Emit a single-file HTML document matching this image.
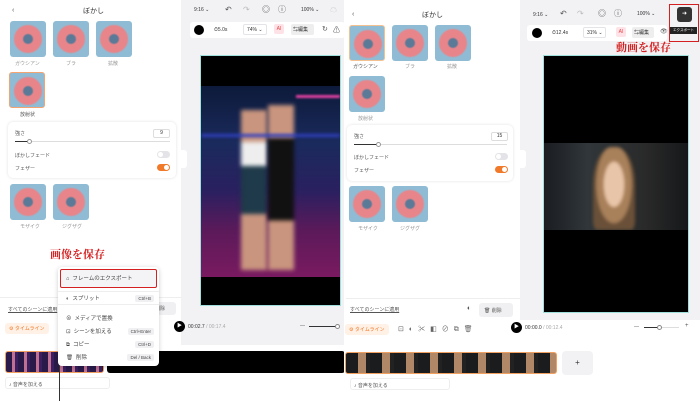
<!DOCTYPE html><html><head><meta charset="utf-8"><style>
*{margin:0;padding:0;box-sizing:border-box}
body{width:700px;height:401px;overflow:hidden;background:#fff;font-family:"Liberation Sans","Noto Sans CJK JP",sans-serif;color:#333;position:relative}
.a{position:absolute}
.t{font-size:5px;color:#555;white-space:nowrap}
.th{position:absolute;width:36px;height:36px;border-radius:3px;background:#8fbcd4;overflow:hidden}
.th::after{content:"";position:absolute;left:4px;top:4px;width:28px;height:28px;border-radius:50%;border:9px solid #e8858a;background:#5a7a98;box-sizing:border-box;filter:blur(.6px)}
.card{position:absolute;background:#fff;border-radius:5px;box-shadow:0 0 3px rgba(0,0,0,.12)}
.tg{position:absolute;width:13px;height:7px;border-radius:4px;background:#e4e4e8}
.tg::after{content:"";position:absolute;left:1px;top:1px;width:5px;height:5px;border-radius:50%;background:#fff}
.tg.on{background:#f07a2a}.tg.on::after{left:7px}
.gray{background:#f2f2f5}
.red{color:#d42020;font-weight:bold;font-family:"Noto Serif CJK SC",serif}
.chip{position:absolute;background:#fff1e6;color:#f07a2a;font-size:5px;border-radius:3px;padding:2px 4px}
.mi{position:absolute;left:8px;font-size:5.5px;color:#444}
.kb{position:absolute;right:5px;font-size:4.5px;background:#f0f0f2;padding:1px 3px;border-radius:2px;color:#444}
</style></head><body>
<!-- LEFT -->
<div class="a gray" style="left:181px;top:0;width:164px;height:345px"></div>
<div class="a t" style="left:12px;top:7px;font-size:7px">‹</div>
<div class="a t" style="left:83px;top:6px;font-size:7px;color:#333">ぼかし</div>
<div class="th" style="left:10px;top:21px"></div><div class="th" style="left:53px;top:21px"></div><div class="th" style="left:96px;top:21px"></div>
<div class="a t" style="left:15px;top:60px;color:#999">ガウシアン</div><div class="a t" style="left:66px;top:60px;color:#999">ブラ</div><div class="a t" style="left:108px;top:60px;color:#999">拡散</div>
<div class="th" style="left:9px;top:72px;border:1.5px solid #f3a470"></div>
<div class="a t" style="left:20px;top:111px">放射状</div>
<div class="card" style="left:8px;top:122px;width:168px;height:56px"></div>
<div class="a t" style="left:15px;top:130px">強さ</div>
<div class="a" style="left:153px;top:129px;width:17px;height:9px;border:1px solid #ddd;border-radius:2px;font-size:5px;text-align:center;line-height:7px">9</div>
<div class="a" style="left:15px;top:141px;width:155px;height:1px;background:#ddd"></div>
<div class="a" style="left:15px;top:141px;width:14px;height:1px;background:#333"></div>
<div class="a" style="left:27px;top:139px;width:5px;height:5px;border-radius:50%;border:1px solid #999;background:#fff"></div>
<div class="a t" style="left:15px;top:152px">ぼかしフェード</div><div class="tg" style="left:157px;top:151px"></div>
<div class="a t" style="left:15px;top:165px">フェザー</div><div class="tg on" style="left:157px;top:164px"></div>
<div class="th" style="left:10px;top:184px"></div><div class="th" style="left:53px;top:184px"></div>
<div class="a t" style="left:20px;top:223px;color:#999">モザイク</div><div class="a t" style="left:62px;top:223px;color:#999">ジグザグ</div>
<div class="a" style="left:181px;top:150px;width:6px;height:18px;background:#fff;border-radius:0 3px 3px 0"></div>
<div class="a t" style="left:194px;top:7px;color:#333">9:16 ⌄</div>
<div class="a t" style="left:225px;top:5px;font-size:8px">↶</div><div class="a t" style="left:243px;top:5px;font-size:8px;color:#bbb">↷</div>
<div class="a t" style="left:262px;top:4px;font-size:8px">◎</div><div class="a t" style="left:278px;top:4px;font-size:8px">ⓘ</div>
<div class="a t" style="left:301px;top:7px;color:#333">100% ⌄</div><div class="a t" style="left:330px;top:5px;font-size:7px;color:#bbb">☁</div>
<div class="a" style="left:190px;top:22px;width:155px;height:16px;background:#fff;border-radius:3px"></div>
<div class="a" style="left:194px;top:25px;width:10px;height:10px;border-radius:50%;background:#000"></div>
<div class="a t" style="left:214px;top:27px;color:#333">⏱5.0s</div>
<div class="a t" style="left:243px;top:24px;width:24px;height:11px;border:1px solid #e4e4e8;border-radius:2px;padding:2px 3px;color:#333">74% ⌄</div>
<div class="a" style="left:274px;top:24px;width:10px;height:10px;background:#fde3e8;border-radius:2px;color:#e44;font-size:5px;text-align:center;line-height:10px">AI</div>
<div class="a t" style="left:291px;top:24px;width:23px;height:11px;background:#eee;border-radius:2px;padding:2px;color:#333">⇆編集</div>
<div class="a t" style="left:322px;top:25px;font-size:7px">↻</div><div class="a t" style="left:333px;top:25px;font-size:7px">⚠</div>
<div class="a" style="left:200px;top:55px;width:141px;height:251px;background:#000;border:1px solid #9fe0dc"></div>
<div class="a" style="left:201px;top:86px;width:139px;height:191px;overflow:hidden;background:linear-gradient(180deg,#0d1a3a 0%,#1a2a5c 30%,#2a2060 55%,#5a1a5a 75%,#7a1a60 100%)">
<div class="a" style="left:40px;top:24px;width:26px;height:160px;filter:blur(2px);background:linear-gradient(#c9957e 0 20%,#eee 20% 35%,#1f3a4a 35% 65%,#c9957e 65%)"></div>
<div class="a" style="left:67px;top:19px;width:26px;height:165px;filter:blur(2px);background:linear-gradient(#c9957e 0 20%,#111 20% 70%,#c9957e 70%)"></div>
<div class="a" style="left:95px;top:9px;width:44px;height:3px;background:#e040a0;filter:blur(1px)"></div>
<div class="a" style="left:0;top:48px;width:139px;height:3px;background:#3040c0;filter:blur(1.5px)"></div>
</div>
<div class="a red" style="left:50px;top:246px;font-size:11px">画像を保存</div>
<div class="a" style="left:0;top:297px;width:181px;height:1px;background:#eee"></div>
<div class="a t" style="left:8px;top:306px;text-decoration:underline">すべてのシーンに適用</div>
<div class="a t" style="left:152px;top:302px;width:24px;height:13px;background:#f0f0f2;border-radius:3px;padding:3px">削除</div>
<div class="chip" style="left:5px;top:323px">⚙ タイムライン</div>
<div class="a" style="left:174px;top:321px;width:11px;height:11px;border-radius:50%;background:#000;color:#fff;font-size:5px;text-align:center;line-height:11px">▶</div>
<div class="a t" style="left:188px;top:324px;color:#333">00:02.7 <span style="color:#aaa">/ 00:17.4</span></div>
<div class="a t" style="left:300px;top:323px">—</div><div class="a" style="left:309px;top:326px;width:30px;height:1px;background:#333"></div><div class="a" style="left:335px;top:324px;width:5px;height:5px;border-radius:50%;border:1px solid #888;background:#fff"></div>
<div class="a" style="left:5px;top:351px;width:99px;height:22px;border:1.5px solid #f0a060;border-radius:3px;background:repeating-linear-gradient(90deg,#2a1a4a 0 6px,#c07090 6px 9px,#3a2060 9px 12px)"></div>
<div class="a" style="left:107px;top:351px;width:238px;height:22px;background:#000;border-radius:3px"></div>
<div class="a t" style="left:5px;top:377px;width:105px;height:12px;border:1px solid #eee;border-radius:3px;padding:3px">♪ 音声を加える</div>
<div class="a" style="left:59px;top:333px;width:1px;height:68px;background:#333"></div>
<div class="a" style="z-index:10;left:58px;top:267px;width:101px;height:99px;background:#fff;border-radius:4px;box-shadow:0 1px 5px rgba(0,0,0,.2)">
<div class="a" style="left:2px;top:2px;width:97px;height:19px;border:1.5px solid #d42020;background:#f4f4f6;border-radius:2px"></div>
<div class="mi" style="top:7px">⌂ &nbsp;フレームのエクスポート</div>
<div class="a" style="left:0;top:24px;width:101px;height:1px;background:#eee"></div>
<div class="mi" style="top:27px">◐ &nbsp;スプリット</div><div class="kb" style="top:28px">Ctrl+B</div>
<div class="a" style="left:0;top:37px;width:101px;height:1px;background:#eee"></div>
<div class="mi" style="top:47px">⊗ &nbsp;メディアで置換</div>
<div class="mi" style="top:60px">⊡ &nbsp;シーンを加える</div><div class="kb" style="top:61px">Ctrl+Enter</div>
<div class="mi" style="top:73px">⧉ &nbsp;コピー</div><div class="kb" style="top:74px">Ctrl+D</div>
<div class="mi" style="top:86px">🗑 &nbsp;削除</div><div class="kb" style="top:87px">Del / Back</div>
</div>
<!-- RIGHT -->
<div class="a" style="left:344px;top:0;width:2px;height:401px;background:#fff"></div>
<div class="a gray" style="left:520px;top:0;width:180px;height:320px"></div>
<div class="a t" style="left:352px;top:11px;font-size:7px">‹</div>
<div class="a t" style="left:422px;top:10px;font-size:7px;color:#333">ぼかし</div>
<div class="th" style="left:349px;top:25px;border:1.5px solid #f3c090"></div><div class="th" style="left:392px;top:25px"></div><div class="th" style="left:435px;top:25px"></div>
<div class="a t" style="left:353px;top:63px">ガウシアン</div><div class="a t" style="left:405px;top:63px;color:#999">ブラ</div><div class="a t" style="left:447px;top:63px;color:#999">拡散</div>
<div class="th" style="left:349px;top:76px"></div>
<div class="a t" style="left:358px;top:115px;color:#999">放射状</div>
<div class="card" style="left:347px;top:125px;width:166px;height:56px"></div>
<div class="a t" style="left:354px;top:133px">強さ</div>
<div class="a" style="left:491px;top:132px;width:17px;height:9px;border:1px solid #ddd;border-radius:2px;font-size:5px;text-align:center;line-height:7px">15</div>
<div class="a" style="left:354px;top:144px;width:153px;height:1px;background:#ddd"></div>
<div class="a" style="left:354px;top:144px;width:25px;height:1px;background:#333"></div>
<div class="a" style="left:376px;top:142px;width:5px;height:5px;border-radius:50%;border:1px solid #999;background:#fff"></div>
<div class="a t" style="left:354px;top:154px">ぼかしフェード</div><div class="tg" style="left:495px;top:153px"></div>
<div class="a t" style="left:354px;top:167px">フェザー</div><div class="tg on" style="left:495px;top:166px"></div>
<div class="th" style="left:349px;top:186px"></div><div class="th" style="left:392px;top:186px"></div>
<div class="a t" style="left:358px;top:225px;color:#999">モザイク</div><div class="a t" style="left:400px;top:225px;color:#999">ジグザグ</div>
<div class="a" style="left:520px;top:150px;width:6px;height:18px;background:#fff;border-radius:0 3px 3px 0"></div>
<div class="a t" style="left:533px;top:12px;color:#333">9:16 ⌄</div>
<div class="a t" style="left:560px;top:9px;font-size:8px">↶</div><div class="a t" style="left:577px;top:9px;font-size:8px;color:#bbb">↷</div>
<div class="a t" style="left:598px;top:8px;font-size:8px">◎</div><div class="a t" style="left:614px;top:8px;font-size:8px">ⓘ</div>
<div class="a t" style="left:637px;top:11px;color:#333">100% ⌄</div>
<div class="a" style="left:669px;top:4px;width:30px;height:38px;border:1.5px solid #d42020"></div>
<div class="a" style="left:677px;top:7px;width:15px;height:15px;background:#333;border-radius:3px;color:#fff;font-size:6px;text-align:center;line-height:15px">➜</div>
<div class="a" style="left:670px;top:27px;width:27px;height:7px;background:#222;color:#fff;font-size:3.5px;text-align:center;line-height:7px">エクスポート</div>
<div class="a" style="left:527px;top:25px;width:140px;height:16px;background:#fff;border-radius:3px"></div>
<div class="a" style="left:532px;top:28px;width:10px;height:10px;border-radius:50%;background:#000"></div>
<div class="a t" style="left:552px;top:30px;color:#333">⏱12.4s</div>
<div class="a t" style="left:583px;top:27px;width:23px;height:11px;border:1px solid #e4e4e8;border-radius:2px;padding:2px 3px;color:#333">31% ⌄</div>
<div class="a" style="left:616px;top:27px;width:10px;height:10px;background:#fde3e8;border-radius:2px;color:#e44;font-size:5px;text-align:center;line-height:10px">AI</div>
<div class="a t" style="left:632px;top:27px;width:22px;height:11px;background:#eee;border-radius:2px;padding:2px;color:#333">⇆編集</div>
<div class="a t" style="left:660px;top:28px;font-size:6px">👁</div>
<div class="a red" style="left:616px;top:39px;font-size:11px">動画を保存</div>
<div class="a" style="left:543px;top:55px;width:146px;height:258px;background:#000;border:1px solid #9fe0dc"></div>
<div class="a" style="left:544px;top:143px;width:144px;height:87px;overflow:hidden;background:linear-gradient(90deg,#1a1c20,#30363a 30%,#2a2a2a 70%,#15181a)">
<div class="a" style="left:49px;top:4px;width:42px;height:83px;filter:blur(1.5px);border-radius:45% 45% 10% 10%;background:radial-gradient(ellipse at 50% 45%,#e8c4a8 0 35%,#a8805a 36% 60%,#6a5038 61%)"></div></div>
<div class="a" style="left:346px;top:298px;width:174px;height:1px;background:#eee"></div>
<div class="a t" style="left:350px;top:306px;text-decoration:underline">すべてのシーンに適用</div>
<div class="a t" style="left:467px;top:305px;font-size:7px">◐</div>
<div class="a t" style="left:479px;top:303px;width:34px;height:14px;background:#f0f0f2;border-radius:3px;padding:4px 5px">🗑 削除</div>
<div class="chip" style="left:345px;top:324px">⚙ タイムライン</div>
<div class="a t" style="left:398px;top:324px;font-size:7px;letter-spacing:5px;color:#666">⊡◐✂◧⊘⧉🗑</div>
<div class="a" style="left:511px;top:322px;width:11px;height:11px;border-radius:50%;background:#000;color:#fff;font-size:5px;text-align:center;line-height:11px">▶</div>
<div class="a t" style="left:525px;top:325px;color:#333">00:00.0 <span style="color:#aaa">/ 00:12.4</span></div>
<div class="a t" style="left:634px;top:324px">—</div><div class="a" style="left:644px;top:327px;width:15px;height:1px;background:#333"></div><div class="a" style="left:659px;top:327px;width:20px;height:1px;background:#ddd"></div><div class="a" style="left:657px;top:325px;width:5px;height:5px;border-radius:50%;border:1px solid #888;background:#fff"></div><div class="a t" style="left:685px;top:323px;font-size:6px">+</div>
<div class="a" style="left:345px;top:352px;width:212px;height:22px;border:1.5px solid #f0a060;border-radius:3px;background:repeating-linear-gradient(90deg,#1a1c1e 0 12px,#b08868 12px 20px,#222 20px 24px)"></div>
<div class="a" style="left:562px;top:351px;width:31px;height:24px;background:#f2f2f5;border-radius:4px;font-size:8px;text-align:center;line-height:24px">+</div>
<div class="a t" style="left:350px;top:378px;width:100px;height:12px;border:1px solid #eee;border-radius:3px;padding:3px">♪ 音声を加える</div>
</body></html>
